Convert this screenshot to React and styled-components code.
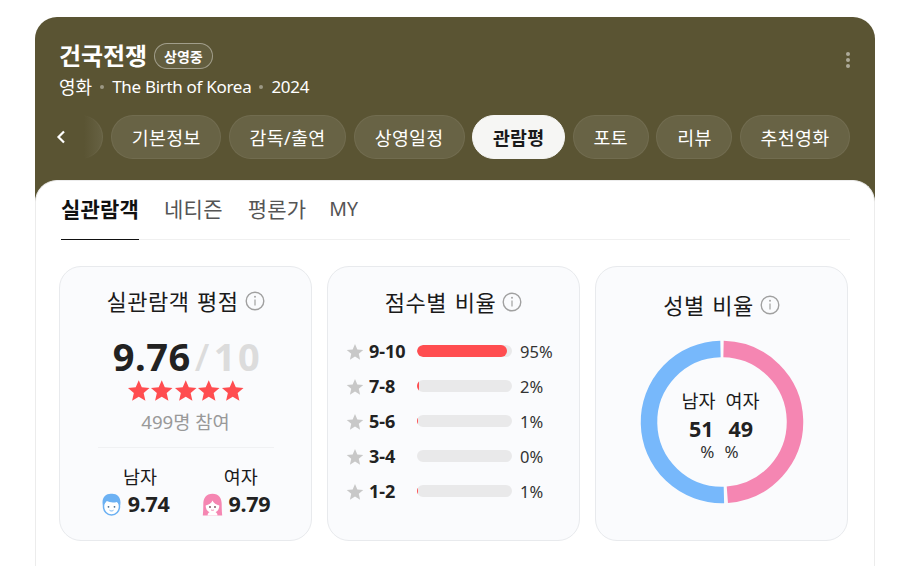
import React from 'react';
import styled, { createGlobalStyle } from 'styled-components';

const Global = createGlobalStyle`
  html, body { margin: 0; padding: 0; background: #fff; overflow: hidden; }
  body { font-family: "Noto Sans", "Noto Sans CJK KR", sans-serif; color: #1a1a1a; }
`;
const Page = styled.div`
  width: 915px; height: 566px; box-sizing: border-box; padding: 17px 40px 0 35px; overflow: hidden;
`;
const Card = styled.div`
  width: 840px; height: 600px; background: #5a5433; border-radius: 22px 22px 0 0; overflow: hidden;
  display: flex; flex-direction: column;
`;
const Header = styled.header`
  height: 163px; flex: none; box-sizing: border-box; padding: 23px 25px 0 24px; position: relative;
`;
const TitleRow = styled.div`display: flex; align-items: center; gap: 7px; height: 32px;`;
const Title = styled.h1`margin: 0; font-size: 24px; font-weight: 700; color: #fff; line-height: 32px; letter-spacing: -0.1px;`;
const Badge = styled.span`
  display: flex; align-items: center; justify-content: center; width: 59px; height: 26px; box-sizing: border-box;
  border: 1px solid rgba(255,255,255,.4); border-radius: 13px; color: #fff; font-size: 14px; font-weight: 700;
  background: rgba(255,255,255,.06);
`;
const Sub = styled.div`
  display: flex; align-items: center; color: #fff; font-size: 17px; line-height: 24px; margin-top: 3px; letter-spacing: -0.3px;
`;
const SubKo = styled.span`font-size: 18px; letter-spacing: 0;`;
const Dot = styled.i`width: 4px; height: 4px; border-radius: 50%; background: rgba(255,255,255,.4); margin: 0 8px; flex: none;`;
const More = styled.div`
  position: absolute; right: 25px; top: 35px; display: flex; flex-direction: column; gap: 2px;
  i { width: 4px; height: 4px; border-radius: 50%; background: rgba(255,255,255,.5); }
`;
const TabsWrap = styled.div`position: relative; margin: 16px 0 0 -24px; width: 840px; height: 44px;`;
const Tabs = styled.nav`display: flex; justify-content: flex-end; gap: 7.6px; padding-right: 25px; overflow: hidden; height: 44px;`;
const Pill = styled.button`
  flex: none; height: 44px; box-sizing: border-box; width: ${p => p.$w}px; padding: 0; border-radius: 22px; font: inherit;
  font-size: 18.4px; letter-spacing: .3px; font-weight: ${p => p.$active ? 700 : 400}; color: ${p => p.$active ? '#1a1a1a' : '#fff'};
  background: ${p => p.$active ? '#f6f6f4' : 'rgba(255,255,255,.09)'};
  border: 1px solid ${p => p.$active ? '#f6f6f4' : 'rgba(255,255,255,.06)'};
`;
const Fade = styled.div`
  position: absolute; left: 0; top: 0; width: 70px; height: 44px; display: flex; align-items: center; padding-left: 20px; box-sizing: border-box;
  background: linear-gradient(90deg, #5a5433 70%, rgba(90,84,51,0));
`;
const Panel = styled.main`
  flex: 1; background: #fff; border: 1px solid #ececec; border-bottom: 0; border-radius: 22px 22px 0 0; box-sizing: border-box; padding: 0 24px 0 23px; margin-top: 0;
`;
const SubTabs = styled.div`display: flex; gap: 25px; height: 58px; border-bottom: 1px solid #f0f0f0; margin-left: 2px;`;
const SubTab = styled.div`
  height: 59px; box-sizing: border-box; padding-top: 13px; font-size: ${p => p.$latin ? 19.5 : 21}px; line-height: 30px; letter-spacing: .2px;
  margin-left: ${p => p.$latin ? -2 : 0}px;
  font-weight: ${p => p.$active ? 700 : 400}; color: ${p => p.$active ? '#111' : '#555'};
  border-bottom: ${p => p.$active ? '1px solid #111' : '0'};
`;
const Stats = styled.section`display: grid; grid-template-columns: repeat(3, 253px); gap: 15px; margin-top: 26px;`;
const Stat = styled.article`
  height: 275px; box-sizing: border-box; background: #fafbfd; border: 1px solid #e8eaed; border-radius: 22px;
  display: flex; flex-direction: column; align-items: center;
`;
const StatTitle = styled.h2`
  margin: ${p => p.$top}px 0 0; display: flex; align-items: center; gap: 6px; font-size: 22px; font-weight: 400; line-height: 28px; color: #1a1a1a; letter-spacing: .5px; word-spacing: 1.5px;
`;
const Big = styled.div`
  display: flex; align-items: baseline; font-size: 38px; font-weight: 700; line-height: 42px; margin-top: 20px; margin-left: 4px; color: #222; letter-spacing: .5px;
`;
const Slash = styled.span`color: #dcdcdc; font-weight: 500; margin: 0 4px;`;
const Muted = styled.span`color: #dcdcdc; letter-spacing: 2.5px;`;
const Stars = styled.div`display: flex; margin-top: 2px; height: 24px;`;
const Count = styled.div`font-size: 18.7px; line-height: 26px; color: #999; margin-top: 6px;`;
const Rule = styled.hr`width: 176px; border: 0; border-top: 1px solid #f0f1f3; margin: 12px 0 0;`;
const Genders = styled.div`display: flex; gap: 32px; margin-top: 16px;`;
const Gender = styled.div`display: flex; flex-direction: column; align-items: center;`;
const GenderLabel = styled.div`font-size: 18.5px; line-height: 25px; margin-left: 10px;`;
const GenderScore = styled.div`display: flex; align-items: center; gap: 6px; font-size: 21.5px; font-weight: 700; line-height: 30px; color: #222; letter-spacing: -.3px;`;
const Rows = styled.div`display: flex; flex-direction: column; gap: 11px; margin-top: 23px; width: 100%; padding-left: 18px; box-sizing: border-box;`;
const Row = styled.div`display: flex; align-items: center; height: 24px;`;
const Range = styled.span`width: 48px; margin-left: 5px; font-size: 18px; font-weight: 700; color: #222;`;
const Track = styled.div`width: 95px; height: 12px; border-radius: 6px; background: #e9e9ea; overflow: hidden;`;
const Fill = styled.div`height: 100%; background: #ff4d50; border-radius: 6px;`;
const Pct = styled.span`margin-left: 8px; font-size: 16.5px; color: #333;`;
const Donut = styled.div`position: relative; width: 166px; height: 166px; margin-top: 20px;`;
const DonutText = styled.div`
  position: absolute; inset: 0; display: grid; grid-template-columns: 1fr 1fr; align-content: center; padding: 5px 2px 0 0;
`;
const DCell = styled.div`
  justify-self: ${p => p.$side === 'l' ? 'end' : 'start'};
  ${p => p.$side === 'l' ? `margin-right: ${p.$off}px;` : `margin-left: ${p.$off}px;`}
`;
const DLabel = styled(DCell)`font-size: 18.5px; line-height: 26px; white-space: nowrap;`;
const DNum = styled(DCell)`font-size: 21.5px; font-weight: 700; line-height: 28px; margin-top: 1px; color: #222;`;
const DPct = styled(DCell)`font-size: 17px; line-height: 18px; color: #333;`;

const Info = () => (
  <svg width="20" height="20" viewBox="0 0 20 20" fill="none" style={{ flex: 'none' }}>
    <circle cx="10" cy="10" r="8.8" stroke="#a0a0a0" strokeWidth="1.4" />
    <circle cx="10" cy="5.8" r="1" fill="#a8a8a8" />
    <path d="M10 8.400v6.200" stroke="#a8a8a8" strokeWidth="1.300" />
  </svg>
);
const Star = ({ color, size, className }) => (
  <svg className={className} width={size} height={size} viewBox="0 0 24 24" style={{ flex: 'none' }}>
    <path d="M12 1.2l3.1 7.3 7.9.7-6 5.2 1.8 7.8L12 18.1 5.2 22.2 7 14.4 1 9.2l7.9-.7z" fill={color} />
  </svg>
);
const RowStar = styled(Star)`margin-top: 2px;`;
const Male = () => (
  <svg width="21" height="23" viewBox="0 0 21 23">
    <ellipse cx="10.500" cy="13.500" rx="8" ry="8.500" fill="#fff" stroke="#6cb1f3" strokeWidth="1.500" />
    <path d="M2.300 14.500C-.500 5 4.500.300 10.500.800 16.500.300 21.500 5 18.700 14.500c-.3-2.500-1.200-4.300-2.700-5.600-3.500 1-7.500.600-10.200-.800-1.700 1.300-3 3.400-3.500 6.400z" fill="#6cb1f3" />
    <circle cx="7.500" cy="13.800" r=".9" fill="#4a6a8a" /><circle cx="13.500" cy="13.800" r=".9" fill="#4a6a8a" />
    <path d="M8.500 17.200c1.200 1 2.800 1 4 0" stroke="#6cb1f3" strokeWidth="1" fill="none" />
  </svg>
);
const Female = () => (
  <svg width="21" height="23" viewBox="0 0 21 23">
    <path d="M10.500.800C4 .800 1.300 5.500 1.300 11c0 4-.1 7.500-.5 11.500h19.400c-.4-4-.5-7.500-.5-11.500 0-5.500-2.700-10.200-9.200-10.200z" fill="#f586b2" />
    <ellipse cx="10.500" cy="13" rx="6.800" ry="6.900" fill="#fff" />
    <path d="M5.500 22.500c0-2.800 2.200-4 5-4s5 1.200 5 4z" fill="#fff" />
    <path d="M3.500 12.500c3.300-.500 6.200-2.500 7-5 1 2.500 3.700 4.500 7 5V6h-14z" fill="#f586b2" />
    <circle cx="8" cy="14" r=".9" fill="#7a4a5a" /><circle cx="13" cy="14" r=".9" fill="#7a4a5a" />
    <path d="M9 16.800c.9.700 2.100.7 3 0" stroke="#f586b2" strokeWidth="1" fill="none" />
  </svg>
);

const tabs = [['', 111], ['기본정보', 110.5], ['감독/출연', 117], ['상영일정', 111], ['관람평', 93, true], ['포토', 76], ['리뷰', 76], ['추천영화', 110]];
const rows = [['9-10', 95, '95%'], ['7-8', 2, '2%'], ['5-6', 1, '1%'], ['3-4', 0, '0%'], ['1-2', 1, '1%']];

function arc(a0, a1, r = 73) {
  const p = a => [83 + r * Math.sin(a * Math.PI / 180), 83 - r * Math.cos(a * Math.PI / 180)];
  const [x0, y0] = p(a0), [x1, y1] = p(a1);
  return `M${x0} ${y0}A${r} ${r} 0 ${a1 - a0 > 180 ? 1 : 0} 1 ${x1} ${y1}`;
}

export default function App() {
  return (
    <Page>
      <Global />
      <Card>
        <Header>
          <TitleRow><Title>건국전쟁</Title><Badge>상영중</Badge></TitleRow>
          <Sub><SubKo>영화</SubKo><Dot />The Birth of Korea<Dot />2024</Sub>
          <More><i /><i /><i /></More>
          <TabsWrap>
            <Tabs>{tabs.map(([t, w, a], i) => <Pill key={i} $w={w} $active={a}>{t}</Pill>)}</Tabs>
            <Fade>
              <svg width="12" height="16" viewBox="0 0 12 16" fill="none"><path d="M9 2.500 3.500 8 9 13.500" stroke="#fff" strokeWidth="2.200" /></svg>
            </Fade>
          </TabsWrap>
        </Header>
        <Panel>
          <SubTabs>
            <SubTab $active>실관람객</SubTab><SubTab>네티즌</SubTab><SubTab>평론가</SubTab><SubTab $latin>MY</SubTab>
          </SubTabs>
          <Stats>
            <Stat>
              <StatTitle $top={20}>실관람객 평점 <Info /></StatTitle>
              <Big>9.76<Slash>/</Slash><Muted>10</Muted></Big>
              <Stars>{[0, 1, 2, 3, 4].map(i => <Star key={i} color="#ff4d50" size={23.500} />)}</Stars>
              <Count>499명 참여</Count>
              <Rule />
              <Genders>
                <Gender><GenderLabel>남자</GenderLabel><GenderScore><Male />9.74</GenderScore></Gender>
                <Gender><GenderLabel>여자</GenderLabel><GenderScore><Female />9.79</GenderScore></Gender>
              </Genders>
            </Stat>
            <Stat>
              <StatTitle $top={21}>점수별 비율 <Info /></StatTitle>
              <Rows>
                {rows.map(([r, v, p]) => (
                  <Row key={r}>
                    <RowStar color="#c8c8c8" size={18} />
                    <Range>{r}</Range>
                    <Track><Fill style={{ width: `${v}%` }} /></Track>
                    <Pct>{p}</Pct>
                  </Row>
                ))}
              </Rows>
            </Stat>
            <Stat>
              <StatTitle $top={24}>성별 비율 <Info /></StatTitle>
              <Donut>
                <svg width="166" height="166" viewBox="0 0 166 166" fill="none">
                  <path d={arc(178.500, 358.800)} stroke="#77b8fb" strokeWidth="16.500" />
                  <path d={arc(1.200, 175.800)} stroke="#f586b2" strokeWidth="16.500" />
                </svg>
                <DonutText>
                  <DLabel $side="l" $off={5}>남자</DLabel><DLabel $side="r" $off={5}>여자</DLabel>
                  <DNum $side="l" $off={7}>51</DNum><DNum $side="r" $off={8}>49</DNum>
                  <DPct $side="l" $off={6}>%</DPct><DPct $side="r" $off={4}>%</DPct>
                </DonutText>
              </Donut>
            </Stat>
          </Stats>
        </Panel>
      </Card>
    </Page>
  );
}
